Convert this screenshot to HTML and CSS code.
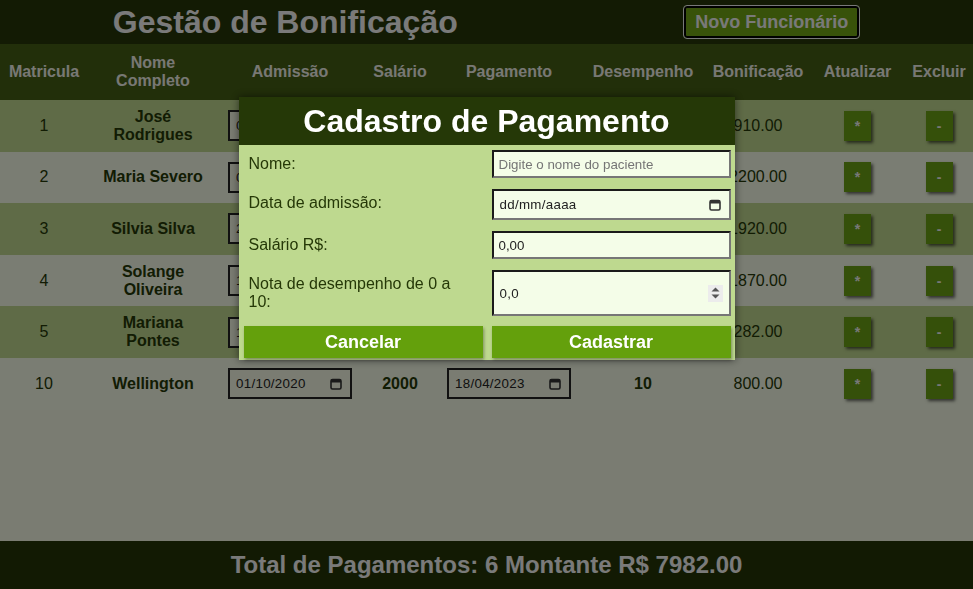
FILE: index.html
```html
<!DOCTYPE html>
<html lang="pt-BR">
<head>
<meta charset="utf-8">
<title>Gestão de Bonificação</title>
<link rel="stylesheet" href="styles.css">
</head>
<body>
<div class="page">
  <header class="topbar">
    <h1 class="title">Gestão de Bonificação</h1>
    <button class="btn-new" type="button">Novo Funcionário</button>
  </header>

  <main class="content">
    <table class="grid">
      <colgroup>
        <col class="c-mat"><col class="c-nome"><col class="c-adm"><col class="c-sal"><col class="c-pag"><col class="c-des"><col class="c-bon"><col class="c-atu"><col class="c-exc">
      </colgroup>
      <thead>
        <tr>
          <th>Matricula</th><th class="name">Nome Completo</th><th>Admissão</th><th>Salário</th><th>Pagamento</th><th>Desempenho</th><th>Bonificação</th><th>Atualizar</th><th>Excluir</th>
        </tr>
      </thead>
      <tbody>
        <tr>
          <td>1</td><td class="name">José Rodrigues</td>
          <td><div class="datefield"><input class="datefield-input" type="text" value="05/03/2019"><svg class="cal" width="12" height="12" viewBox="0 0 12 12"><rect x="1" y="1.5" width="10" height="9.5" rx="1.5" fill="none" stroke="currentColor" stroke-width="1.6"/><rect x="1" y="1.5" width="10" height="3" fill="currentColor"/></svg></div></td>
          <td class="strong">4550</td>
          <td><div class="datefield"><input class="datefield-input" type="text" value="18/04/2023"><svg class="cal" width="12" height="12" viewBox="0 0 12 12"><rect x="1" y="1.5" width="10" height="9.5" rx="1.5" fill="none" stroke="currentColor" stroke-width="1.6"/><rect x="1" y="1.5" width="10" height="3" fill="currentColor"/></svg></div></td>
          <td class="strong">5</td><td>910.00</td>
          <td><button class="btn-action" type="button">*</button></td><td><button class="btn-action" type="button">-</button></td>
        </tr>
        <tr>
          <td>2</td><td class="name">Maria Severo</td>
          <td><div class="datefield"><input class="datefield-input" type="text" value="02/08/2018"><svg class="cal" width="12" height="12" viewBox="0 0 12 12"><rect x="1" y="1.5" width="10" height="9.5" rx="1.5" fill="none" stroke="currentColor" stroke-width="1.6"/><rect x="1" y="1.5" width="10" height="3" fill="currentColor"/></svg></div></td>
          <td class="strong">5500</td>
          <td><div class="datefield"><input class="datefield-input" type="text" value="18/04/2023"><svg class="cal" width="12" height="12" viewBox="0 0 12 12"><rect x="1" y="1.5" width="10" height="9.5" rx="1.5" fill="none" stroke="currentColor" stroke-width="1.6"/><rect x="1" y="1.5" width="10" height="3" fill="currentColor"/></svg></div></td>
          <td class="strong">10</td><td>2200.00</td>
          <td><button class="btn-action" type="button">*</button></td><td><button class="btn-action" type="button">-</button></td>
        </tr>
        <tr>
          <td>3</td><td class="name">Silvia Silva</td>
          <td><div class="datefield"><input class="datefield-input" type="text" value="20/01/2021"><svg class="cal" width="12" height="12" viewBox="0 0 12 12"><rect x="1" y="1.5" width="10" height="9.5" rx="1.5" fill="none" stroke="currentColor" stroke-width="1.6"/><rect x="1" y="1.5" width="10" height="3" fill="currentColor"/></svg></div></td>
          <td class="strong">4800</td>
          <td><div class="datefield"><input class="datefield-input" type="text" value="18/04/2023"><svg class="cal" width="12" height="12" viewBox="0 0 12 12"><rect x="1" y="1.5" width="10" height="9.5" rx="1.5" fill="none" stroke="currentColor" stroke-width="1.6"/><rect x="1" y="1.5" width="10" height="3" fill="currentColor"/></svg></div></td>
          <td class="strong">10</td><td>1920.00</td>
          <td><button class="btn-action" type="button">*</button></td><td><button class="btn-action" type="button">-</button></td>
        </tr>
        <tr>
          <td>4</td><td class="name">Solange Oliveira</td>
          <td><div class="datefield"><input class="datefield-input" type="text" value="15/06/2017"><svg class="cal" width="12" height="12" viewBox="0 0 12 12"><rect x="1" y="1.5" width="10" height="9.5" rx="1.5" fill="none" stroke="currentColor" stroke-width="1.6"/><rect x="1" y="1.5" width="10" height="3" fill="currentColor"/></svg></div></td>
          <td class="strong">4675</td>
          <td><div class="datefield"><input class="datefield-input" type="text" value="18/04/2023"><svg class="cal" width="12" height="12" viewBox="0 0 12 12"><rect x="1" y="1.5" width="10" height="9.5" rx="1.5" fill="none" stroke="currentColor" stroke-width="1.6"/><rect x="1" y="1.5" width="10" height="3" fill="currentColor"/></svg></div></td>
          <td class="strong">10</td><td>1870.00</td>
          <td><button class="btn-action" type="button">*</button></td><td><button class="btn-action" type="button">-</button></td>
        </tr>
        <tr>
          <td>5</td><td class="name">Mariana Pontes</td>
          <td><div class="datefield"><input class="datefield-input" type="text" value="12/11/2022"><svg class="cal" width="12" height="12" viewBox="0 0 12 12"><rect x="1" y="1.5" width="10" height="9.5" rx="1.5" fill="none" stroke="currentColor" stroke-width="1.6"/><rect x="1" y="1.5" width="10" height="3" fill="currentColor"/></svg></div></td>
          <td class="strong">2820</td>
          <td><div class="datefield"><input class="datefield-input" type="text" value="18/04/2023"><svg class="cal" width="12" height="12" viewBox="0 0 12 12"><rect x="1" y="1.5" width="10" height="9.5" rx="1.5" fill="none" stroke="currentColor" stroke-width="1.6"/><rect x="1" y="1.5" width="10" height="3" fill="currentColor"/></svg></div></td>
          <td class="strong">5</td><td>282.00</td>
          <td><button class="btn-action" type="button">*</button></td><td><button class="btn-action" type="button">-</button></td>
        </tr>
        <tr>
          <td>10</td><td class="name">Wellington</td>
          <td><div class="datefield"><input class="datefield-input" type="text" value="01/10/2020"><svg class="cal" width="12" height="12" viewBox="0 0 12 12"><rect x="1" y="1.5" width="10" height="9.5" rx="1.5" fill="none" stroke="currentColor" stroke-width="1.6"/><rect x="1" y="1.5" width="10" height="3" fill="currentColor"/></svg></div></td>
          <td class="strong">2000</td>
          <td><div class="datefield"><input class="datefield-input" type="text" value="18/04/2023"><svg class="cal" width="12" height="12" viewBox="0 0 12 12"><rect x="1" y="1.5" width="10" height="9.5" rx="1.5" fill="none" stroke="currentColor" stroke-width="1.6"/><rect x="1" y="1.5" width="10" height="3" fill="currentColor"/></svg></div></td>
          <td class="strong">10</td><td>800.00</td>
          <td><button class="btn-action" type="button">*</button></td><td><button class="btn-action" type="button">-</button></td>
        </tr>
      </tbody>
    </table>
  </main>

  <footer class="totals">
    <h2 class="totals-text">Total de Pagamentos: 6 Montante R$ 7982.00</h2>
  </footer>
</div>

<div class="overlay"></div>

<div class="modal">
  <h2 class="modal-title">Cadastro de Pagamento</h2>
  <form class="modal-form">
    <label class="modal-label" for="f-nome">Nome:</label>
    <input class="modal-input" id="f-nome" type="text" placeholder="Digite o nome do paciente">

    <label class="modal-label" for="f-data">Data de admissão:</label>
    <div class="modal-input modal-date"><input class="datefield-input" id="f-data" type="text" value="dd/mm/aaaa"><svg class="cal" width="12" height="12" viewBox="0 0 12 12"><rect x="1" y="1.5" width="10" height="9.5" rx="1.5" fill="none" stroke="currentColor" stroke-width="1.6"/><rect x="1" y="1.5" width="10" height="3" fill="currentColor"/></svg></div>

    <label class="modal-label" for="f-sal">Salário R$:</label>
    <input class="modal-input" id="f-sal" type="text" value="0,00">

    <label class="modal-label" for="f-nota">Nota de desempenho de 0 a 10:</label>
    <div class="modal-input modal-number"><input class="datefield-input" id="f-nota" type="text" value="0,0"><span class="spin"><svg width="9" height="12" viewBox="0 0 9 12"><path d="M4.5 0.5 L8.5 4.5 H0.5 Z M0.5 7.5 H8.5 L4.5 11.5 Z" fill="#555"/></svg></span></div>

    <button class="btn-form" type="button">Cancelar</button>
    <button class="btn-form" type="button">Cadastrar</button>
  </form>
</div>
</body>
</html>
```

FILE: styles.css
```css
* { box-sizing: border-box; }

html, body {
  margin: 0;
  padding: 0;
}

body {
  font-family: "Liberation Sans", Arial, sans-serif;
  background: #f4f8e4;
  color: #253807;
}

.page {
  display: flex;
  flex-direction: column;
  min-height: 100vh;
}

.topbar {
  height: 44px;
  background: #263608;
  display: flex;
  justify-content: space-around;
  align-items: center;
}

.title {
  margin: 0;
  font-size: 32px;
  font-weight: bold;
  color: #f4f4f4;
  line-height: 37px;
}

.btn-new {
  font-family: inherit;
  font-size: 18px;
  font-weight: bold;
  color: #f2f2f2;
  background: #70a414;
  border: 1px solid #f0f0f0;
  border-radius: 4px;
  box-shadow: inset 0 0 0 2px #000;
  padding: 0 11px;
  height: 34px;
  white-space: nowrap;
  line-height: 20px;
}

.content {
  flex: 1;
}

.grid {
  width: 100%;
  border-collapse: collapse;
  table-layout: fixed;
}

.c-mat { width: 88px; }
.c-nome { width: 130px; }
.c-adm { width: 144px; }
.c-sal { width: 76px; }
.c-pag { width: 142px; }
.c-des { width: 126px; }
.c-bon { width: 104px; }
.c-atu { width: 95px; }
.c-exc { width: 68px; }

.grid thead tr {
  background: #445e14;
  height: 56px;
}

.grid th {
  color: #f0f0e8;
  font-size: 16px;
  font-weight: bold;
  padding: 0 4px;
  text-align: center;
  line-height: 18px;
}

.grid td {
  font-size: 16px;
  text-align: center;
  padding: 0 4px;
  line-height: 18px;
  color: #253807;
}

.grid .name {
  padding: 0 10px;
  font-weight: bold;
}

.grid .strong { font-weight: bold; }

.grid tbody tr { height: 51.6px; }
.grid tbody tr:nth-child(odd) { background: #bed68e; }
.grid tbody tr:nth-child(even) { background: #f4fae6; }

.datefield {
  display: inline-flex;
  align-items: center;
  width: 124px;
  height: 31px;
  border: 2px solid #222;
  background: #f4f8e4;
  padding: 0 8px 0 6px;
  vertical-align: middle;
  color: #333;
}

.datefield-input {
  flex: 1;
  min-width: 0;
  border: none;
  background: transparent;
  padding: 0;
  margin: 0;
  font-family: "Liberation Sans", Arial, sans-serif;
  font-size: 13.33px;
  letter-spacing: 0.3px;
  color: #222;
  outline: none;
}

.cal {
  flex: none;
  color: #333;
}

.btn-action {
  width: 27px;
  height: 30px;
  border: none;
  background: #6aa014;
  color: #f0f0f0;
  font-family: inherit;
  font-weight: bold;
  font-size: 14px;
  padding: 0;
  box-shadow: 2px 2px 3px rgba(0, 0, 0, 0.6);
  vertical-align: middle;
}

.totals {
  height: 48px;
  background: #243406;
  display: flex;
  align-items: center;
  justify-content: center;
}

.totals-text {
  margin: 0;
  font-size: 24px;
  font-weight: bold;
  color: #f4f4f4;
}

.overlay {
  position: fixed;
  inset: 0;
  background: rgba(0, 0, 0, 0.5);
}

.modal {
  position: fixed;
  top: 97px;
  left: 50%;
  margin-left: -248px;
  width: 496px;
  background: #bed98f;
  box-shadow: 0 0 8px rgba(0, 0, 0, 0.55);
}

.modal-title {
  margin: 0;
  height: 48px;
  line-height: 48px;
  background: #253807;
  color: #ffffff;
  font-size: 32px;
  font-weight: bold;
  text-align: center;
}

.modal-form {
  display: grid;
  grid-template-columns: 1fr 1fr;
  column-gap: 9px;
  row-gap: 11px;
  padding: 5px 4px 2px 5px;
}

.modal-label {
  font-size: 16px;
  line-height: 18px;
  padding: 5px 24px 5px 5px;
  color: #253807;
}

.modal-input {
  border-style: solid;
  border-width: 2px;
  border-color: #1a1a1a #767676 #767676 #1a1a1a;
  background: #f4fde8;
  font-family: "Liberation Sans", Arial, sans-serif;
  font-size: 13.33px;
  color: #222;
  padding: 0 5px;
  margin: 0;
  width: 100%;
  outline: none;
}

.modal-input::placeholder {
  color: #757575;
}

.modal-date {
  display: flex;
  align-items: center;
  height: 31px;
  padding: 0 8px 0 6px;
}

.modal-number {
  display: flex;
  align-items: center;
  padding: 0 6px 0 6px;
}

.spin {
  flex: none;
  width: 15px;
  height: 17px;
  background: #ececec;
  display: flex;
  align-items: center;
  justify-content: center;
}

.btn-form {
  height: 32px;
  border: none;
  background: #64a00c;
  color: #ffffff;
  font-family: inherit;
  font-size: 18px;
  font-weight: bold;
  box-shadow: 1px 2px 3px rgba(0, 0, 0, 0.35);
  margin-top: -1px;
}
```
